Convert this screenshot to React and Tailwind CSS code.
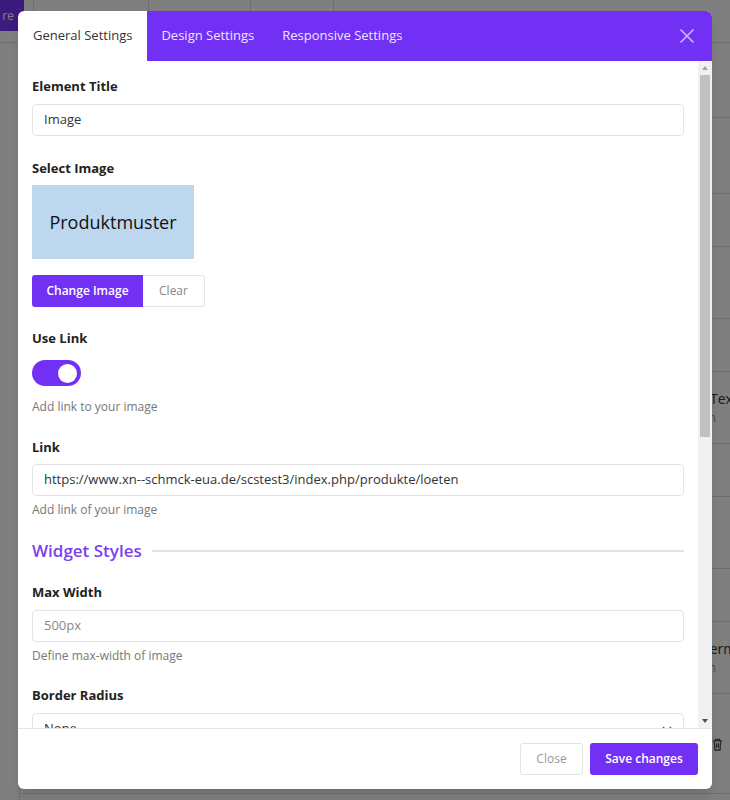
import React from 'react';

const purple = 'bg-[#7230f5]';

function Label({ children, className = '' }) {
  return <label className={`block text-[13px] leading-[18px] font-bold text-[#222] ${className}`}>{children}</label>;
}

function Help({ children }) {
  return <p className="mt-[6px] text-[12px] leading-[16px] text-[#777]">{children}</p>;
}

function TextInput({ value, muted, className = '' }) {
  return (
    <div
      className={`h-[32px] rounded-[4px] border border-[#e3e3e3] px-[11px] flex items-center text-[13px] ${
        muted ? 'text-[#888]' : 'text-[#333]'
      } ${className}`}
    >
      {value}
    </div>
  );
}

function BackgroundPage() {
  // row heights of the list behind the modal
  const rows = [75, 76, 53, 72, 53, 72, 53, 72, 53, 72, 100];
  return (
    <div className="flex flex-col h-full">
      {/* top toolbar */}
      <div className="h-[43px] flex items-stretch border-b border-[#ddd] text-[12px] text-[#555] whitespace-nowrap">
        <div className="w-[24px] h-[31px] bg-[#7a36fd] text-white text-[12px] flex items-center justify-end pr-[10px] overflow-hidden">
          re
        </div>
        <div className="w-[9px]" />
        <div className="w-[115px] border-l border-[#ddd] pt-[9px] px-[18px] overflow-hidden">Show Content</div>
        <div className="w-[102px] border-l border-[#ddd] pt-[9px] px-[12px] overflow-hidden">Settings</div>
        <div className="w-[83px] border-l border-[#ddd] pt-[9px] px-[14px] overflow-hidden">Styles</div>
        <div className="flex-1 border-l border-[#ddd] pt-[9px] flex gap-[60px] pl-[100px]">
          <span>Layout</span>
          <span>Standard</span>
        </div>
      </div>
      <div className="flex flex-1">
        <div className="w-[20px] border-r border-[#ddd]" />
        <div className="flex-1 flex flex-col overflow-hidden">
          {rows.map((h, i) => (
            <div
              key={i}
              style={{ height: h }}
              className={`shrink-0 border-b border-[#ddd] flex flex-col pl-[690px] whitespace-nowrap ${
                i === 10 ? 'justify-start pt-[44px]' : 'justify-center'
              }`}
            >
              {i === 5 && (
                <>
                  <span className="text-[14px] leading-[20px] text-[#333]">Text</span>
                  <span className="-ml-[28px] text-[12px] leading-[18px] text-[#999]">Zeilen</span>
                </>
              )}
              {i === 9 && (
                <>
                  <span className="-ml-[8px] text-[14px] leading-[20px] text-[#333]">Termin</span>
                  <span className="-ml-[28px] text-[12px] leading-[18px] text-[#999]">Zeilen</span>
                </>
              )}
              {i === 10 && (
                <div className="pl-[2px] text-[#555]">
                  <svg width="11" height="13" viewBox="0 0 12 14" fill="none" stroke="currentColor" strokeWidth="1.4">
                    <path d="M1 3h10M4 3V1.5h4V3M2.5 3l.7 10h5.6l.7-10M5 5.5v5M7 5.5v5" />
                  </svg>
                </div>
              )}
            </div>
          ))}
        </div>
      </div>
    </div>
  );
}

export default function App() {
  return (
    <div className="relative w-[730px] h-[800px] overflow-hidden bg-white font-['Open_Sans','Noto_Sans',sans-serif]">
      <BackgroundPage />
      <div className="absolute inset-0 bg-black/50" />

      {/* Modal */}
      <div className="absolute left-[18px] top-[11px] w-[694px] h-[778px] rounded-[6px] bg-white flex flex-col overflow-hidden shadow-lg">
        {/* Header */}
        <div className={`h-[50px] ${purple} flex items-stretch text-[13px]`}>
          <div className="bg-white text-[#333] px-[15px] flex items-center rounded-tl-[6px]">General Settings</div>
          <div className="text-[#eee6ff] px-[14px] flex items-center">Design Settings</div>
          <div className="text-[#eee6ff] px-[14px] flex items-center">Responsive Settings</div>
          <div className="flex-1" />
          <button className="w-[50px] flex items-center justify-center text-[#cdb8ff]">
            <svg width="16" height="16" viewBox="0 0 16 16" stroke="currentColor" strokeWidth="1.6" fill="none">
              <path d="M1.5 1.5l13 13M14.5 1.5l-13 13" />
            </svg>
          </button>
        </div>

        {/* Body */}
        <div className="flex-1 flex min-h-0">
          <div className="flex-1 overflow-hidden px-[14px] pt-[16px]">
            <Label>Element Title</Label>
            <TextInput value="Image" className="mt-[9px]" />

            <Label className="mt-[23px]">Select Image</Label>
            <div className="mt-[8px] w-[162px] h-[74px] bg-[#bdd7ee] flex items-center justify-center text-[18px] text-[#111]">
              Produktmuster
            </div>
            <div className="flex mt-[16px]">
              <button className={`h-[32px] w-[111px] ${purple} text-white text-[12px] font-semibold rounded-l-[3px]`}>
                Change Image
              </button>
              <button className="h-[32px] w-[62px] border border-l-0 border-[#e3e3e3] text-[#888] text-[12px] rounded-r-[3px]">
                Clear
              </button>
            </div>

            <Label className="mt-[22px]">Use Link</Label>
            <div className="mt-[13px] w-[49px] h-[26px] rounded-full bg-[#7230f5] flex items-center justify-end pr-[4px]">
              <div className="w-[19px] h-[19px] rounded-full bg-white" />
            </div>
            <p className="mt-[13px] text-[12px] leading-[16px] text-[#777]">Add link to your image</p>

            <Label className="mt-[23px]">Link</Label>
            <TextInput
              value="https://www.xn--schmck-eua.de/scstest3/index.php/produkte/loeten"
              className="mt-[8px]"
            />
            <Help>Add link of your image</Help>

            <div className="mt-[21px] flex items-center gap-[10px]">
              <h3 className="text-[17px] leading-[24px] font-semibold text-[#7b3ff0]">Widget Styles</h3>
              <div className="flex-1 h-[2px] bg-[#e2e2e2]" />
            </div>

            <Label className="mt-[20px]">Max Width</Label>
            <TextInput value="500px" muted className="mt-[9px]" />
            <Help>Define max-width of image</Help>

            <Label className="mt-[22px]">Border Radius</Label>
            <div className="mt-[9px] h-[32px] rounded-[4px] border border-[#e3e3e3] px-[11px] flex items-center justify-between text-[13px] text-[#333]">
              <span>None</span>
              <svg width="10" height="6" viewBox="0 0 10 6" fill="none" stroke="#555" strokeWidth="1.3">
                <path d="M1 1l4 4 4-4" />
              </svg>
            </div>
          </div>

          {/* Scrollbar */}
          <div className="w-[14px] bg-[#f1f1f1] flex flex-col items-stretch">
            <div className="h-[14px] flex items-center justify-center">
              <div className="w-0 h-0 border-l-[3px] border-r-[3px] border-b-[4px] border-l-transparent border-r-transparent border-b-[#a3a3a3]" />
            </div>
            <div className="h-[362px] mx-[2px] bg-[#c1c1c1]" />
            <div className="flex-1" />
            <div className="h-[14px] flex items-center justify-center">
              <div className="w-0 h-0 border-l-[3px] border-r-[3px] border-t-[4px] border-l-transparent border-r-transparent border-t-[#505050]" />
            </div>
          </div>
        </div>

        {/* Footer */}
        <div className="h-[61px] border-t border-[#e5e5e5] flex items-center justify-end gap-[7px] px-[14px]">
          <button className="h-[32px] w-[63px] rounded-[3px] border border-[#e3e3e3] text-[12px] text-[#999]">Close</button>
          <button className={`h-[32px] w-[108px] rounded-[3px] ${purple} text-white text-[12px] font-semibold`}>
            Save changes
          </button>
        </div>
      </div>
    </div>
  );
}
